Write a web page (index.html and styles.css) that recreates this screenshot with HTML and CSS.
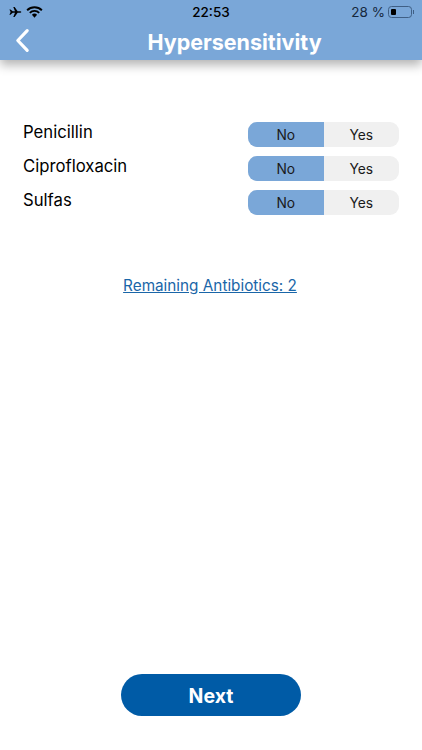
FILE: index.html
```html
<!DOCTYPE html>
<html lang="en">

<head>
    <meta charset="utf-8">
    <title>Hypersensitivity</title>
    <link rel="stylesheet" href="styles.css">
</head>

<body>
    <!-- header -->
    <header class="app-header">
        <div class="status-bar">
            <div class="status-bar__left">
                <svg class="icon-plane" viewBox="0 0 16 12" width="14" height="12">
                    <path d="M0.5 6 L3 6 L1.6 3 L2.8 3 L5.4 5.2 L8 5.2 L6 0.4 L7.6 0.4 L11 5.2 L14 5.2 C15.6 5.2 15.6 6.8 14 6.8 L11 6.8 L7.6 11.6 L6 11.6 L8 6.8 L5.4 6.8 L2.8 9 L1.6 9 L3 6 Z" fill="#000"/>
                </svg>
                <svg class="icon-wifi" viewBox="0 0 18 13" width="17" height="12">
                    <path d="M1 4.6 A11.5 11.5 0 0 1 17 4.6" fill="none" stroke="#000" stroke-width="2"/>
                    <path d="M3.9 7.4 A7.4 7.4 0 0 1 14.1 7.4" fill="none" stroke="#000" stroke-width="2"/>
                    <path d="M9 12.6 L6.2 9.6 A4 4 0 0 1 11.8 9.6 Z" fill="#000"/>
                </svg>
            </div>
            <div class="status-bar__time">22:53</div>
            <div class="status-bar__right">
                <span>28 %</span>
                <span class="battery"><span class="battery__level"></span></span>
                <span class="battery__cap"></span>
            </div>
        </div>
        <div class="nav-bar">
            <svg class="icon-back" viewBox="0 0 16 26" width="15" height="25">
                <path d="M13 2.5 L3 13 L13 23.5" fill="none" stroke="#fff" stroke-width="3.4" stroke-linecap="round" stroke-linejoin="round"/>
            </svg>
            <h1 class="nav-bar__title">Hypersensitivity</h1>
        </div>
    </header>

    <!-- antibiotics -->
    <main class="content">
        <div class="allergy-list">
            <div class="allergy-row">
                <span class="allergy-row__name">Penicillin</span>
                <div class="toggle">
                    <span class="toggle__option toggle__option--on">No</span>
                    <span class="toggle__option">Yes</span>
                </div>
            </div>
            <div class="allergy-row">
                <span class="allergy-row__name">Ciprofloxacin</span>
                <div class="toggle">
                    <span class="toggle__option toggle__option--on">No</span>
                    <span class="toggle__option">Yes</span>
                </div>
            </div>
            <div class="allergy-row">
                <span class="allergy-row__name">Sulfas</span>
                <div class="toggle">
                    <span class="toggle__option toggle__option--on">No</span>
                    <span class="toggle__option">Yes</span>
                </div>
            </div>
        </div>
        <a class="remaining-link" href="#">Remaining Antibiotics: 2</a>
    </main>

    <!-- footer -->
    <footer class="app-footer">
        <button class="next-button">Next</button>
    </footer>
</body>

</html>
```

FILE: styles.css
```css
* {
    box-sizing: border-box;
}
html, body {
    height: 100%;
}
body {
    margin: 0;
    display: flex;
    flex-direction: column;
    height: 750px;
    overflow: hidden;
    background-color: #ffffff;
    font-family: Inter, 'Liberation Sans', sans-serif;
    color: #000000;
}

/* ====== */
/* Header */
/* ====== */
.app-header {
    height: 60px;
    flex: none;
    background-color: #7aa7d8;
    box-shadow: 0 5px 10px rgba(0, 0, 0, 0.3);
}
.status-bar {
    display: grid;
    grid-template-columns: 1fr auto 1fr;
    align-items: center;
    height: 24px;
    padding: 0 8px 0 8px;
    font-size: 13.5px;
}
.status-bar__left {
    display: flex;
    align-items: center;
    gap: 4px;
}
.status-bar__time {
    font-weight: 500;
}
.status-bar__right {
    display: flex;
    align-items: center;
    justify-content: flex-end;
    color: #16283d;
}
.battery {
    display: flex;
    align-items: center;
    width: 24px;
    height: 12px;
    margin-left: 3px;
    padding: 2px;
    border: 1px solid #3f5f85;
    border-radius: 3.5px;
}
.battery__level {
    width: 5px;
    height: 100%;
    background-color: #000000;
    border-radius: 1px;
}
.battery__cap {
    width: 1px;
    height: 4px;
    margin-left: 1px;
    background-color: #3f5f85;
}
.nav-bar {
    position: relative;
    display: flex;
    justify-content: center;
    align-items: center;
    height: 36px;
    padding-left: 47px;
}
.nav-bar__title {
    margin: 0;
    font-size: 21.5px;
    font-weight: 700;
    color: #ffffff;
}
.icon-back {
    position: absolute;
    left: 15px;
    top: 4px;
}

/* ======= */
/* Content */
/* ======= */
.content {
    flex: 1;
    padding: 62px 23px 0;
}
.allergy-list {
    display: flex;
    flex-direction: column;
    gap: 9px;
}
.allergy-row {
    display: flex;
    justify-content: space-between;
    height: 25px;
}
.allergy-row__name {
    font-size: 16.7px;
    line-height: 21px;
}
.toggle {
    display: flex;
    width: 151px;
    border-radius: 9px;
    overflow: hidden;
    background-color: #f0f0f0;
    font-size: 13.8px;
}
.toggle__option {
    flex: 1;
    display: flex;
    justify-content: center;
    align-items: center;
    color: #1a1a1a;
}
.toggle__option--on {
    background-color: #7aa7d8;
}
.remaining-link {
    display: block;
    margin-top: 61px;
    padding-right: 2px;
    text-align: center;
    font-size: 15.3px;
    line-height: 20px;
    color: #1a66a8;
}

/* ====== */
/* Footer */
/* ====== */
.app-footer {
    display: flex;
    justify-content: center;
    padding-bottom: 34px;
}
.next-button {
    width: 180px;
    height: 42px;
    padding: 1px 0 0;
    border: none;
    border-radius: 21px;
    background-color: #005ba6;
    color: #ffffff;
    font-family: inherit;
    font-size: 19.5px;
    font-weight: 700;
}
```
